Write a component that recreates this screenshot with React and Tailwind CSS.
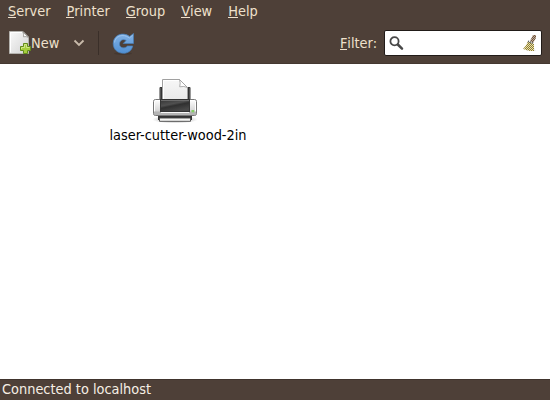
const menus = ['Server', 'Printer', 'Group', 'View', 'Help'];

function Mnemonic({ text }) {
  return (
    <span className="relative whitespace-pre">
      <span className="relative">
        {text[0]}
        <span className="absolute inset-x-0 bottom-px h-px bg-[#eee0cc]" />
      </span>
      {text.slice(1)}
    </span>
  );
}

function NewIcon() {
  return (
    <svg width="24" height="26" viewBox="0 0 24 26">
      <defs>
        <linearGradient id="page" x1="0" y1="0" x2="1" y2="1">
          <stop offset="0" stopColor="#fafafa" />
          <stop offset="1" stopColor="#d3d3d3" />
        </linearGradient>
      </defs>
      <path d="M1.5 1.5H15L20.5 7V23.5H1.5Z" fill="url(#page)" stroke="#b4b2ae" />
      <path d="M2.5 22.5V2.5H14.5" fill="none" stroke="#fff" />
      <path d="M14.5 1.5L20.5 7.5Q18 6 15.5 6.8Q16.3 4 14.5 1.5Z" fill="#fff" stroke="#96938e" strokeWidth=".8" />
      <path d="M15.5 13.5H19.5V16.5H22.5V20.5H19.5V23.5H15.5V20.5H12.5V16.5H15.5Z" fill="#a6cd3d" stroke="#638b1b" />
      <path d="M13.5 19V17.5H16.5V14.5H18.5V17.5H21.5" fill="none" stroke="#d0e58a" />
    </svg>
  );
}

function RefreshIcon() {
  return (
    <svg width="24" height="24" viewBox="0 0 24 24">
      <defs>
        <linearGradient id="arrow" x1="0" y1="0" x2="0" y2="1">
          <stop offset="0" stopColor="#84b3e5" />
          <stop offset="1" stopColor="#5090d4" />
        </linearGradient>
      </defs>
      <ellipse cx="12" cy="21.5" rx="9" ry="1.5" fill="#332923" opacity=".35" />
      <path d="M22.5 1.5V11.5H12.2L15.2 8.4C11.6 6.4 8.5 8.7 8.5 12C8.5 16 13.5 17.3 16.5 14H21.7C20.7 18.8 16.7 21.3 12.5 21.3C6.5 21.3 2.2 17.3 2.2 11.5C2.2 3.2 11.7-.9 18.7 4.5Z" fill="url(#arrow)" stroke="#477fb9" strokeWidth=".7" />
      <path d="M3.5 10.5C4.2 4.2 11.8 .9 18.4 6L21.5 3.3" fill="none" stroke="#a8ccf0" strokeWidth=".7" />
    </svg>
  );
}

function SearchIcon() {
  return (
    <svg width="16" height="16" viewBox="0 0 16 16" fill="none">
      <circle cx="5.5" cy="6.2" r="4.1" stroke="#484848" strokeWidth="1.8" />
      <path d="M8.8 9.5L13 13.7" stroke="#484848" strokeWidth="2.5" strokeLinecap="round" />
    </svg>
  );
}

function BroomIcon() {
  return (
    <svg width="16" height="17" viewBox="0 0 16 17">
      <defs>
        <pattern id="check" width="2" height="2" patternUnits="userSpaceOnUse">
          <rect width="2" height="2" fill="#e9e2ad" />
          <rect width="1" height="1" fill="#8f7d33" />
          <rect x="1" y="1" width="1" height="1" fill="#8f7d33" />
        </pattern>
        <pattern id="handle" width="2" height="2" patternUnits="userSpaceOnUse">
          <rect width="2" height="2" fill="#c2aa91" />
          <rect width="1" height="1" fill="#6a5443" />
          <rect x="1" y="1" width="1" height="1" fill="#6a5443" />
        </pattern>
      </defs>
      <path d="M4 16H14L12 13H5Z" fill="#ededed" />
      <path d="M6 6L12 9V16H8L1 14L4 10.5Z" fill="url(#check)" />
      <path d="M8 6L10 2L11 0H14V3L11 8Z" fill="url(#handle)" />
      <path d="M6 6.3L11.5 8.5" stroke="#52565b" strokeWidth="1.8" strokeDasharray="1 1" />
    </svg>
  );
}

function PrinterIcon() {
  return (
    <svg width="48" height="48" viewBox="0 0 48 48">
      <defs>
        <linearGradient id="body" x1="0" y1="0" x2="0" y2="1">
          <stop offset="0" stopColor="#fff" />
          <stop offset=".65" stopColor="#dadada" />
          <stop offset="1" stopColor="#bbb" />
        </linearGradient>
        <linearGradient id="slot" x1="0" y1="0" x2=".5" y2="1">
          <stop offset="0" stopColor="#343434" />
          <stop offset=".45" stopColor="#505050" />
          <stop offset=".6" stopColor="#303030" />
          <stop offset="1" stopColor="#484848" />
        </linearGradient>
        <linearGradient id="sheet" x1="0" y1="0" x2="0" y2="1">
          <stop offset="0" stopColor="#f7f7f7" />
          <stop offset="1" stopColor="#e9e9e9" />
        </linearGradient>
        <radialGradient id="shadow">
          <stop offset="0" stopColor="#000" stopOpacity=".45" />
          <stop offset="1" stopColor="#000" stopOpacity="0" />
        </radialGradient>
      </defs>
      <ellipse cx="24" cy="43.5" rx="23" ry="4" fill="url(#shadow)" />
      <rect x="8.5" y="11" width="31" height="15" rx="1" fill="#343434" />
      <path d="M9.5 12V23M38.5 12V23" stroke="#555" />
      <path d="M11.5 3.5H28.5L36.5 11.5V25H11.5Z" fill="url(#sheet)" stroke="#a0a0a0" />
      <path d="M12.5 24V4.5H28" fill="none" stroke="#fff" />
      <path d="M28.5 3.5L36.5 11.5Q33 9.8 28.7 10.8Q29.8 7 28.5 3.5Z" fill="#fff" stroke="#999" strokeWidth=".8" />
      <path d="M4.5 23.5H43.5Q45.5 23.5 45.5 25.5V37.5Q45.5 39.5 43.5 39.5H4.5Q2.5 39.5 2.5 37.5V25.5Q2.5 23.5 4.5 23.5Z" fill="url(#body)" stroke="#777" />
      <path d="M3.5 37V25.5Q3.5 24.5 4.5 24.5H43.5Q44.5 24.5 44.5 25.5V37" fill="none" stroke="#fff" />
      <path d="M3 35.5H45V37.5Q45 39 43.5 39H4.5Q3 39 3 37.5Z" fill="#b5b5b5" />
      <rect x="9.5" y="23.5" width="29" height="12" fill="url(#slot)" stroke="#333" />
      <path d="M10 24.5H38" stroke="#6c6c6c" />
      <path d="M10 36.5H38" stroke="#f8f8f8" />
      <rect x="40.5" y="34" width="2.7" height="2.3" fill="#84cf63" />
      <path d="M7 40H41V42.5H7Z" fill="#343434" />
      <path d="M7.5 40V44M40.5 40V44" stroke="#333" />
      <path d="M8.5 42H39.5V45.3H8.5Z" fill="#f5f5f3" stroke="#444" strokeWidth=".9" />
    </svg>
  );
}

export default function App() {
  return (
    <div className="flex h-[400px] w-[550px] flex-col overflow-hidden bg-white font-['DejaVu_Sans_Condensed','DejaVu_Sans',sans-serif] text-[14.4px] leading-[18px] font-normal [font-stretch:condensed] text-[#eee0cc]">
      <header className="h-16 border-b border-[#443831] bg-[#4e4038]">
        <nav className="flex h-[22px] gap-4 pt-[2px] pl-2">
          {menus.map((menu) => <Mnemonic key={menu} text={menu} />)}
        </nav>
        <div className="flex h-[42px] items-center pl-2">
          <NewIcon />
          <span className="-ml-px w-[42px]">New</span>
          <svg width="12" height="8" viewBox="0 0 12 8" fill="none">
            <path d="M1.5 1.5L6 6L10.5 1.5" stroke="#c9bbab" strokeWidth="1.8" />
          </svg>
          <div className="ml-[13px] h-6 w-px bg-[#3a2f29]" />
          <div className="ml-3 pt-px"><RefreshIcon /></div>
          <div className="mr-[7px] ml-auto"><Mnemonic text="Filter:" /></div>
          <div className="mr-2 flex h-[26px] w-[158px] items-center justify-between rounded-[2px] border border-[#211b18] bg-white pr-[3px] pl-[4px]">
            <SearchIcon />
            <BroomIcon />
          </div>
        </div>
      </header>
      <main className="flex-1 bg-white pt-3 pl-[109px] text-black">
        <div className="flex w-[138px] flex-col items-center">
          <div className="-ml-[6px]"><PrinterIcon /></div>
          <span className="mt-[2px] whitespace-nowrap">laser-cutter-wood-2in</span>
        </div>
      </main>
      <footer className="h-[21px] border-t border-[#40342d] bg-[#4e4038] pl-[2px] text-[#f6efe5]">Connected to localhost</footer>
    </div>
  );
}
